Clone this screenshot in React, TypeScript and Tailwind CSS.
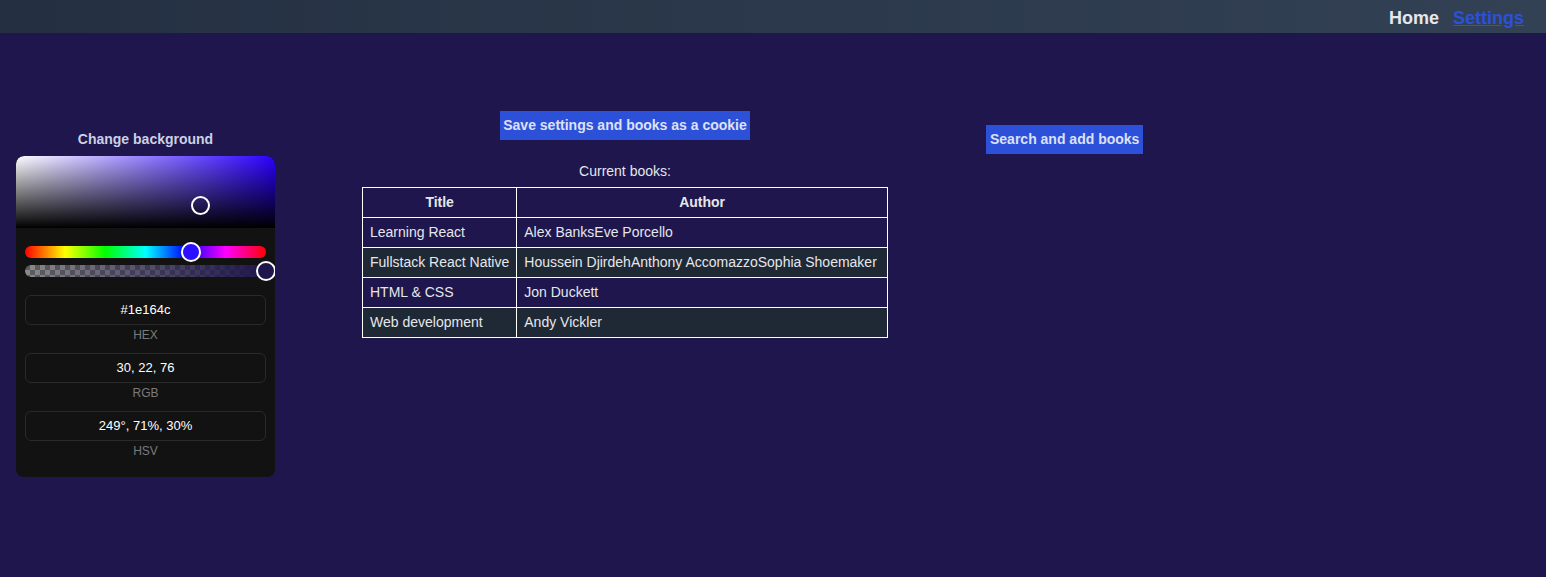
import React from "react";

const books = [
  { title: "Learning React", author: "Alex BanksEve Porcello" },
  { title: "Fullstack React Native", author: "Houssein DjirdehAnthony AccomazzoSophia Shoemaker" },
  { title: "HTML & CSS", author: "Jon Duckett" },
  { title: "Web development", author: "Andy Vickler" },
];

const ColorField = ({ value, label }: { value: string; label: string }) => (
  <div className="flex flex-col items-center">
    <div className="h-[30px] w-full rounded-md border border-[#2a2a2a] flex items-center justify-center text-[13px] text-white">
      {value}
    </div>
    <div className="mt-[2px] h-[26px] text-[12px] leading-[16px] text-[#7a7a7a]">{label}</div>
  </div>
);

const Picker = () => (
  <div className="w-[259px] rounded-lg bg-[#121212] overflow-hidden">
    <div className="relative h-[72px] rounded-t-lg bg-[linear-gradient(to_top,#000,transparent),linear-gradient(to_right,#fff,#2b00ff)]">
      <div className="absolute left-[175px] top-[40px] h-[19px] w-[19px] rounded-full border-2 border-white" />
    </div>
    <div className="px-[9px] pt-[18px] pb-[8px]">
      <div className="relative h-[12px] rounded-full bg-[linear-gradient(to_right,#f00,#ff0,#0f0,#0ff,#00f,#f0f,#f00)]">
        <div className="absolute left-[156px] top-[-4px] h-[20px] w-[20px] rounded-full border-2 border-white bg-[#2b10ff]" />
      </div>
      <div className="relative mt-[7px] h-[12px] rounded-full bg-[linear-gradient(to_right,rgba(30,22,76,0),#1e164c),repeating-conic-gradient(#8a8a8a_0_25%,#5e5e5e_0_50%)] bg-[length:100%_100%,10px_10px]">
        <div className="absolute right-[-10px] top-[-4px] h-[20px] w-[20px] rounded-full border-2 border-white bg-[#1e164c]" />
      </div>
      <div className="mt-[18px] flex flex-col">
        <ColorField value="#1e164c" label="HEX" />
        <ColorField value="30, 22, 76" label="RGB" />
        <ColorField value="249°, 71%, 30%" label="HSV" />
      </div>
    </div>
  </div>
);

export default function App() {
  return (
    <div className="min-h-[577px] bg-[#1e164c] font-['Liberation_Sans',Arial,sans-serif] text-gray-200">
      <nav className="h-[33px] pt-1 bg-gradient-to-r from-[#243042] to-[#334155] flex items-center justify-end gap-[14px] pr-[22px] text-[18px] font-bold">
        <a className="text-gray-200">Home</a>
        <a className="text-[#2d50d9] underline">Settings</a>
      </nav>
      <div className="flex items-start">
        <div className="ml-4 mt-[97px] flex flex-col items-center">
          <h2 className="text-[14px] font-bold leading-[18px] text-[#ccd0e4] mb-[8px]">Change background</h2>
          <Picker />
        </div>
        <div className="ml-[87px] mt-[78px] flex flex-col items-center">
          <button className="h-[29px] px-[3px] bg-[#2d50d9] text-[14px] font-bold text-[#dde1f5]">
            Save settings and books as a cookie
          </button>
          <p className="mt-[21px] text-[14px] leading-[20px]">Current books:</p>
          <table className="mt-[6px] w-[526px] border-collapse whitespace-nowrap text-[14px]">
            <thead>
              <tr className="h-[30px]">
                <th className="w-[153px] border border-white px-[7px] font-bold">Title</th>
                <th className="border border-white px-[7px] font-bold">Author</th>
              </tr>
            </thead>
            <tbody>
              {books.map((b, i) => (
                <tr key={b.title} className={`h-[30px] ${i % 2 === 1 ? "bg-[#1f2835]" : ""}`}>
                  <td className="border border-white px-[7px] text-left">{b.title}</td>
                  <td className="border border-white px-[7px] text-left">{b.author}</td>
                </tr>
              ))}
            </tbody>
          </table>
        </div>
        <div className="ml-[98px] mt-[92px]">
          <button className="h-[29px] px-[4px] bg-[#2d50d9] text-[14px] font-bold text-[#dde1f5]">
            Search and add books
          </button>
        </div>
      </div>
    </div>
  );
}
